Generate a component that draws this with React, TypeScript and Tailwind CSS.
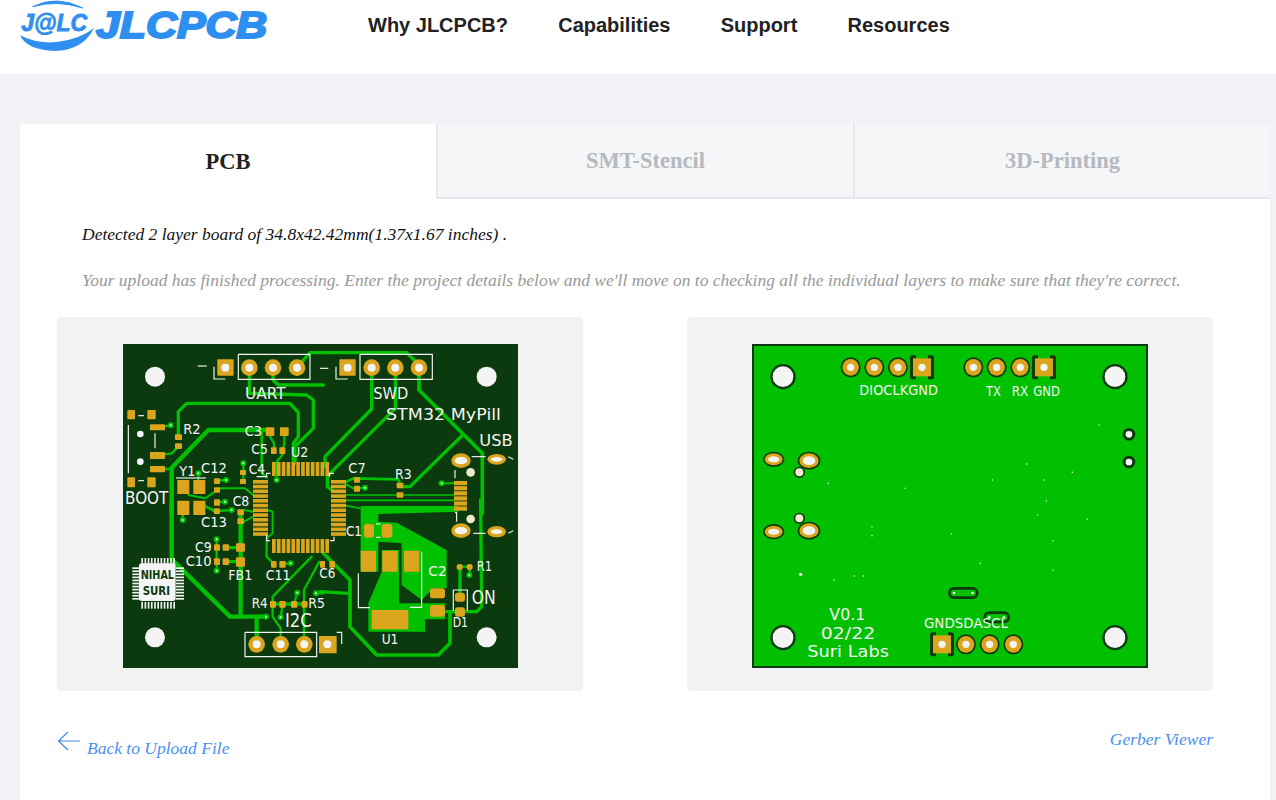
import React from "react";

const G = "#00c000";
const DK = "#0b3a0e";
const AU = "#dba51e";
const W = "#f4f4f4";
const SILK = "DejaVu Sans, sans-serif";

type P = number[];
const Tr = ({ p, w = 10, c = G }: { p: P; w?: number; c?: string }) => (
  <polyline points={p.join(" ")} fill="none" stroke={c} strokeWidth={w} strokeLinejoin="round" strokeLinecap="round" />
);
const Pad = ({ r, c = AU, rx = 2 }: { r: P; c?: string; rx?: number }) => (
  <rect x={r[0]} y={r[1]} width={r[2] - r[0]} height={r[3] - r[1]} rx={rx} fill={c} />
);
const Via = ({ x, y }: { x: number; y: number }) => (
  <g>
    <circle cx={x} cy={y} r={9} fill={G} />
    <circle cx={x} cy={y} r={3} fill={W} />
  </g>
);
const Sk = ({ x, y, s, size = 42, len, fill = W }: { x: number; y: number; s: string; size?: number; len?: number; fill?: string }) => (
  <text x={x} y={y} fontSize={size} fontFamily={SILK} fill={fill} textLength={len} lengthAdjust="spacingAndGlyphs">
    {s}
  </text>
);
const Silk = ({ p }: { p: P }) => <polyline points={p.join(" ")} fill="none" stroke={W} strokeWidth={3.5} />;
const Ring = ({ x, y }: { x: number; y: number }) => (
  <g>
    <circle cx={x} cy={y} r={25} fill={AU} />
    <circle cx={x} cy={y} r={12} fill={W} />
  </g>
);
const Z = ({ x, y, children }: { x: number; y: number; children: React.ReactNode }) => (
  <g transform={`translate(${x} ${y}) scale(0.3333)`}>{children}</g>
);

const range = (n: number) => Array.from({ length: n }, (_, i) => i);

function FrontBoard() {
  return (
    <svg viewBox="123 344 395 324" width={395} height={324} className="block">
      <rect x="123" y="344" width="395" height="324" fill={DK} />
      {/* tracks */}
      <Z x={120} y={340}>
        <Tr p={[388, 83, 388, 160, 560, 165, 580, 180, 580, 265, 525, 320, 525, 370]} />
        <Tr p={[459, 83, 459, 120, 475, 135, 610, 135]} />
        <Tr p={[531, 83, 570, 38, 610, 38]} />
        <Tr p={[175, 290, 175, 215, 200, 190, 510, 190, 535, 218, 535, 290, 520, 310, 520, 370]} />
        <Tr p={[155, 520, 155, 383, 265, 270, 440, 270]} w={13} />
        <Tr p={[120, 345, 155, 340, 175, 320]} w={7} />
        <Tr p={[112, 262, 152, 256]} w={7} />
        <Tr p={[112, 387, 155, 387]} w={7} />
        <Tr p={[425, 275, 425, 400, 440, 412]} w={8} />
        <Tr p={[450, 275, 450, 290, 462, 310, 462, 335]} w={7} />
        <Tr p={[493, 275, 493, 310, 487, 335, 487, 345, 470, 365, 470, 420]} w={7} />
        <Tr p={[370, 370, 370, 420]} w={7} />
        <Tr p={[235, 400, 235, 430]} w={7} />
        <Tr p={[290, 422, 318, 420]} w={7} />
        <Tr p={[205, 465, 255, 475, 300, 445, 375, 445, 400, 465]} w={6} />
        <Tr p={[290, 487, 315, 485]} w={7} />
        <Tr p={[255, 497, 290, 520]} w={6} />
      </Z>
      <Z x={320} y={340}>
        <Tr p={[0, 38, 260, 38, 297, 75]} />
        <Tr p={[297, 83, 297, 150, 487, 340, 487, 520]} w={11} />
        <Tr p={[155, 83, 155, 207, 15, 350, 15, 380]} />
        <Tr p={[226, 83, 226, 205, 30, 400, 22, 412, 22, 440, 35, 450]} />
        <Tr p={[428, 285, 270, 440, 240, 440]} w={10} />
        <Tr p={[80, 425, 100, 415, 235, 418, 240, 430]} w={8} />
        <Tr p={[75, 432, 100, 445, 135, 443]} w={6} />
        <Tr p={[75, 465, 402, 465]} w={5} />
        <Tr p={[75, 481, 402, 481]} w={5} />
        <Tr p={[75, 496, 120, 505]} w={5} />
        <Tr p={[365, 430, 402, 430]} w={6} />
      </Z>
      <Z x={120} y={500}>
        <Tr p={[155, 0, 155, 178, 330, 350, 440, 350]} w={13} />
        <Tr p={[362, 40, 362, 350]} w={13} />
        <Tr p={[410, 350, 410, 430]} w={13} />
        <Tr p={[290, 118, 290, 212]} w={7} />
        <Tr p={[318, 143, 362, 143]} w={10} />
        <Tr p={[318, 185, 362, 185]} w={10} />
        <Tr p={[440, 120, 440, 170, 462, 192]} w={7} />
        <Tr p={[487, 192, 512, 190]} w={7} />
        <Tr p={[443, 30, 458, 35, 458, 100, 440, 115]} w={6} />
        <Tr p={[255, 20, 290, 33, 335, 30]} w={7} />
        <Tr p={[188, 40, 188, 60]} w={7} />
        <Tr p={[400, 35, 372, 30]} w={6} />
        <Tr p={[400, 50, 372, 65]} w={6} />
        <Tr p={[575, 170, 458, 290, 458, 350, 482, 385, 482, 430]} w={7} />
        <Tr p={[598, 185, 552, 270, 552, 430]} w={7} />
        <Tr p={[460, 312, 560, 312]} w={10} />
        <Tr p={[532, 278, 522, 312]} w={7} />
        <Tr p={[482, 352, 487, 320]} w={7} />
        <Tr p={[582, 280, 610, 280]} w={7} />
      </Z>
      <Z x={320} y={500}>
        <polygon fill={G} points="122,18 415,18 415,35 175,42 175,65 230,68 380,150 380,265 340,265 305,300 245,255 245,130 175,125 175,215 122,215" />
        <polygon fill={G} points="185,150 237,150 237,310 375,310 375,358 315,358 315,395 145,395 145,310 185,215" />
        <Tr p={[482, 0, 485, 320, 470, 335, 345, 335]} w={10} />
        <Tr p={[420, 200, 420, 290]} w={10} />
        <Tr p={[420, 200, 450, 200, 448, 225]} w={7} />
        <Tr p={[10, 160, 90, 240, 90, 380, 170, 465, 355, 465, 390, 430, 390, 340]} w={11} />
        <Tr p={[0, 275, 85, 280]} w={10} />
      </Z>
      {/* vias */}
      <Z x={120} y={340}>
        {[[152, 256], [370, 370], [235, 400], [470, 420], [318, 420], [315, 485]].map(([x, y]) => <Via key={`${x}-${y}`} x={x} y={y} />)}
      </Z>
      <Z x={320} y={340}>
        <Via x={135} y={443} />
        <Via x={365} y={430} />
      </Z>
      <Z x={120} y={500}>
        {[[290, 118], [290, 212], [512, 190], [335, 30], [188, 60], [438, 350], [532, 278], [482, 352], [588, 280]].map(([x, y]) => <Via key={`${x}-${y}`} x={x} y={y} />)}
      </Z>
      <Z x={320} y={500}>
        <Via x={448} y={225} />
      </Z>
      {/* U2 fine pins */}
      {range(12).map((i) => (
        <g key={i} fill={AU}>
          <rect x={272 + i * 4.85} y={462} width={3.7} height={14} />
          <rect x={272 + i * 4.85} y={539} width={3.7} height={14} />
          <rect x={253} y={480 + i * 4.75} width={15} height={3.6} />
          <rect x={331} y={480 + i * 4.75} width={15} height={3.6} />
        </g>
      ))}
      {range(6).map((i) => (
        <rect key={i} x={454} y={481 + i * 5.1} width={13} height={4.2} fill={AU} />
      ))}
      {/* pads */}
      <Z x={120} y={340}>
        {[
          [90, 253, 135, 271], [90, 336, 135, 357], [90, 378, 135, 397], [22, 210, 45, 238], [82, 210, 107, 238], [22, 412, 45, 442], [82, 412, 107, 442],
          [165, 283, 186, 300], [165, 310, 186, 327], [437, 262, 463, 288], [480, 262, 506, 288], [453, 322, 470, 342], [478, 322, 496, 342],
          [360, 390, 378, 405], [360, 417, 378, 432], [172, 420, 208, 462], [220, 420, 256, 462], [172, 482, 208, 525], [220, 482, 256, 525],
          [282, 415, 300, 432], [282, 442, 300, 458], [282, 478, 300, 497],
        ].map((r) => <Pad key={r.join()} r={r} />)}
        <Pad r={[292, 58, 341, 107]} />
        <circle cx={316} cy={83} r={12} fill={W} />
        <Ring x={388} y={83} />
        <Ring x={459} y={83} />
        <Ring x={531} y={83} />
        <circle cx={105} cy={110} r={30} fill={W} />
        <circle cx={61} cy={282} r={10} fill={W} />
        <circle cx={61} cy={365} r={10} fill={W} />
      </Z>
      <Z x={320} y={340}>
        <Pad r={[58, 58, 107, 107]} />
        <circle cx={83} cy={83} r={12} fill={W} />
        <Ring x={155} y={83} />
        <Ring x={226} y={83} />
        <Ring x={297} y={83} />
        <circle cx={500} cy={110} r={30} fill={W} />
        {[[102, 412, 120, 428], [102, 437, 120, 455], [230, 428, 250, 445], [230, 457, 250, 473]].map((r) => <Pad key={r.join()} r={r} />)}
        <ellipse cx={423} cy={362} rx={29} ry={22} fill={AU} />
        <ellipse cx={423} cy={362} rx={19} ry={11} fill={W} />
        <ellipse cx={530} cy={358} rx={28} ry={16} fill={AU} />
        <ellipse cx={530} cy={358} rx={17} ry={7} fill={W} />
        <circle cx={452} cy={397} r={13} fill="#eee9c8" />
      </Z>
      <Z x={120} y={500}>
        {[
          [282, 133, 300, 152], [308, 133, 327, 152], [348, 130, 375, 155], [282, 175, 300, 195], [308, 175, 327, 195], [348, 172, 375, 200],
          [453, 183, 470, 203], [478, 183, 497, 203], [352, 28, 372, 46], [352, 55, 372, 72], [282, 25, 300, 42],
          [450, 303, 468, 323], [478, 303, 497, 323], [513, 303, 532, 323], [545, 303, 562, 323],
        ].map((r) => <Pad key={r.join()} r={r} rx={3} />)}
        <Ring x={410} y={433} />
        <Ring x={482} y={433} />
        <Ring x={553} y={433} />
        <circle cx={105} cy={412} r={30} fill={W} />
        {range(11).map((i) => (
          <g key={i} fill={W}>
            <rect x={64 + i * 9.6} y={174} width={5} height={20} />
            <rect x={64 + i * 9.6} y={306} width={5} height={20} />
            <rect x={37} y={202 + i * 9.2} width={24} height={5} />
            <rect x={168} y={202 + i * 9.2} width={24} height={5} />
          </g>
        ))}
        <rect x={57} y={190} width={110} height={113} rx={8} fill={W} />
      </Z>
      <Z x={320} y={500}>
        {[[122, 152, 168, 215], [187, 152, 233, 215], [252, 152, 298, 215], [155, 330, 265, 388], [0, 183, 15, 203], [28, 183, 45, 203]].map((r) => <Pad key={r.join()} r={r} />)}
        {[[132, 72, 162, 113], [185, 72, 217, 113], [330, 265, 375, 295], [330, 315, 375, 350], [405, 278, 435, 305], [405, 322, 435, 350], [410, 192, 428, 210], [440, 192, 458, 210]].map((r) => <Pad key={r.join()} r={r} rx={8} />)}
        <ellipse cx={423} cy={92} rx={29} ry={22} fill={AU} />
        <ellipse cx={423} cy={92} rx={19} ry={11} fill={W} />
        <ellipse cx={530} cy={95} rx={28} ry={17} fill={AU} />
        <ellipse cx={530} cy={95} rx={17} ry={7} fill={W} />
        <circle cx={452} cy={57} r={13} fill="#eee9c8" />
        <circle cx={500} cy={412} r={30} fill={W} />
        <Pad r={[-3, 408, 50, 460]} />
        <circle cx={22} cy={433} r={12} fill={W} />
      </Z>
      {/* silkscreen */}
      <Z x={120} y={340}>
        <Silk p={[355, 43, 570, 43, 570, 118, 355, 118, 355, 43]} />
        <Silk p={[282, 80, 282, 117, 316, 117]} />
        <Silk p={[233, 78, 260, 78]} />
        <Silk p={[55, 227, 72, 227]} />
        <Silk p={[55, 422, 72, 422]} />
        <Silk p={[25, 255, 25, 400]} />
        <Silk p={[105, 280, 105, 325]} />
        <Silk p={[168, 414, 258, 414]} />
        <Silk p={[410, 410, 440, 410, 440, 400, 452, 400]} />
        <Sk x={375} y={176} s="UART" size={46} len={122} />
        <Sk x={190} y={282} s="R2" size={42} len={52} />
        <Sk x={374} y={288} s="C3" size={42} len={52} />
        <Sk x={394} y={342} s="C5" size={42} len={50} />
        <Sk x={513} y={352} s="U2" size={42} len={52} />
        <Sk x={178} y={408} s="Y1" size={42} len={48} />
        <Sk x={243} y={398} s="C12" size={42} len={78} />
        <Sk x={386} y={402} s="C4" size={42} len={50} />
        <Sk x={15} y={492} s="BOOT" size={52} len={130} />
        <Sk x={338} y={498} s="C8" size={40} len={50} />
      </Z>
      <Z x={320} y={340}>
        <Silk p={[120, 43, 337, 43, 337, 118, 120, 118, 120, 43]} />
        <Silk p={[48, 80, 48, 117, 83, 117]} />
        <Silk p={[0, 85, 25, 85]} />
        <Silk p={[455, 350, 497, 350]} />
        <Silk p={[405, 390, 405, 415]} />
        <Silk p={[565, 350, 580, 358]} />
        <Silk p={[28, 410, 28, 400, 42, 400]} />
        <Sk x={160} y={178} s="SWD" size={48} len={105} />
        <Sk x={198} y={240} s="STM32 MyPill" size={48} len={345} />
        <Sk x={478} y={318} s="USB" size={48} len={100} />
        <Sk x={85} y={400} s="C7" size={42} len={52} />
        <Sk x={225} y={418} s="R3" size={40} len={50} />
      </Z>
      <Z x={120} y={500}>
        <Sk x={243} y={82} s="C13" size={42} len={78} />
        <Sk x={225} y={155} s="C9" size={42} len={50} />
        <Sk x={197} y={197} s="C10" size={42} len={78} />
        <Sk x={325} y={240} s="FB1" size={40} len={72} />
        <Sk x={437} y={240} s="C11" size={40} len={75} />
        <Sk x={395} y={323} s="R4" size={40} len={48} />
        <Sk x={565} y={323} s="R5" size={40} len={50} />
        <Sk x={495} y={380} s="I2C" size={56} len={80} />
        <Silk p={[375, 397, 590, 397, 590, 470, 375, 470, 375, 397]} />
        <Silk p={[440, 105, 440, 122, 450, 122]} />
        <text x={62} y={238} fontSize={38} fontWeight={700} fontFamily={SILK} fill={DK} textLength={100} lengthAdjust="spacingAndGlyphs">NIHAL</text>
        <text x={68} y={285} fontSize={38} fontWeight={700} fontFamily={SILK} fill={DK} textLength={82} lengthAdjust="spacingAndGlyphs">SURI</text>
      </Z>
      <Z x={320} y={500}>
        <Silk p={[115, 220, 115, 323, 150, 323]} />
        <Silk p={[270, 322, 305, 322, 305, 155]} />
        <Silk p={[400, 332, 400, 270, 442, 270, 442, 332]} />
        <Silk p={[50, 397, 65, 397, 65, 432]} />
        <Silk p={[460, 100, 497, 100]} />
        <Silk p={[565, 100, 580, 92]} />
        <Silk p={[405, 38, 410, 38, 410, 65]} />
        <Silk p={[30, 122, 42, 122, 42, 110]} />
        <Silk p={[168, 72, 182, 72]} />
        <Silk p={[168, 112, 182, 112]} />
        <Sk x={78} y={107} s="C1" size={42} len={48} />
        <Sk x={-2} y={235} s="C6" size={40} len={48} />
        <Sk x={325} y={228} s="C2" size={44} len={55} />
        <Sk x={470} y={212} s="R1" size={42} len={46} />
        <Sk x={455} y={312} s="ON" size={56} len={72} />
        <Sk x={398} y={380} s="D1" size={40} len={46} />
        <Sk x={185} y={432} s="U1" size={40} len={50} />
      </Z>
    </svg>
  );
}

const BackRound = ({ x, y }: { x: number; y: number }) => (
  <g>
    <circle cx={x} cy={y} r={30} fill={DK} />
    <circle cx={x} cy={y} r={25} fill={AU} />
    <circle cx={x} cy={y} r={11} fill={W} />
  </g>
);
const BackSq = ({ x, y }: { x: number; y: number }) => (
  <g>
    <rect x={x - 36} y={y - 36} width={72} height={72} rx={8} fill={DK} />
    <rect x={x - 18} y={y - 42} width={36} height={84} fill={G} />
    <rect x={x - 27} y={y - 27} width={54} height={54} fill={AU} />
    <circle cx={x} cy={y} r={11} fill={W} />
  </g>
);
const Hole = ({ x, y }: { x: number; y: number }) => (
  <g>
    <circle cx={x} cy={y} r={38} fill={DK} />
    <circle cx={x} cy={y} r={31} fill={W} />
  </g>
);
const Oval = ({ x, y, rx, ry }: { x: number; y: number; rx: number; ry: number }) => (
  <g>
    <ellipse cx={x} cy={y} rx={rx} ry={ry} fill={DK} />
    <ellipse cx={x} cy={y} rx={rx - 5} ry={ry - 5} fill={AU} />
    <ellipse cx={x} cy={y} rx={rx - 15} ry={ry - 14} fill={W} />
  </g>
);
const Slot = ({ x, y, rx }: { x: number; y: number; rx: number }) => (
  <g>
    <rect x={x - rx} y={y - 18} width={rx * 2} height={36} rx={18} fill={DK} />
    <rect x={x - rx + 8} y={y - 10} width={rx * 2 - 16} height={20} rx={10} fill={G} />
    <circle cx={x - rx + 18} cy={y} r={4} fill={W} />
    <circle cx={x + rx - 18} cy={y} r={4} fill={W} />
  </g>
);

function BackBoard() {
  const d1 = [[1047, 255], [830, 372], [967, 397], [727, 420], [883, 420], [889, 483], [235, 430], [466, 445]];
  const d2 = [[863, 45], [1012, 58], [366, 80], [366, 107], [604, 101], [909, 122], [691, 190], [909, 210], [252, 240], [313, 228], [340, 228]];
  return (
    <svg viewBox="752 344 396 324" width={396} height={324} className="block">
      <rect x="752" y="344" width="396" height="324" fill="#f4f4f4" />
      <rect x="753" y="345" width="394" height="322" fill={G} stroke={DK} strokeWidth={2} />
      <Z x={750} y={340}>
        <Hole x={99} y={110} />
        <Hole x={1095} y={110} />
        <BackRound x={302} y={82} />
        <BackRound x={373} y={82} />
        <BackRound x={444} y={82} />
        <BackSq x={516} y={82} />
        <BackRound x={670} y={82} />
        <BackRound x={740} y={82} />
        <BackRound x={811} y={82} />
        <BackSq x={882} y={82} />
        <Sk x={328} y={164} s="DIOCLKGND" size={40} len={236} />
        <Sk x={708} y={167} s="TX" size={40} len={45} />
        <Sk x={785} y={167} s="RX" size={40} len={50} />
        <Sk x={850} y={167} s="GND" size={40} len={80} />
        <Oval x={71} y={358} rx={32} ry={23} />
        <Oval x={177} y={362} rx={34} ry={27} />
        <circle cx={148} cy={397} r={17} fill={DK} />
        <circle cx={148} cy={397} r={12} fill="#f3efcf" />
        <circle cx={1137} cy={283} r={19} fill={DK} />
        <circle cx={1137} cy={283} r={10} fill={W} />
        <circle cx={1137} cy={366} r={19} fill={DK} />
        <circle cx={1137} cy={366} r={10} fill={W} />
        {d1.map(([x, y]) => <circle key={`${x}-${y}`} cx={x} cy={y} r={2.2} fill={W} />)}
      </Z>
      <Z x={750} y={500}>
        <Hole x={99} y={413} />
        <Hole x={1095} y={413} />
        <Oval x={71} y={95} rx={32} ry={23} />
        <Oval x={177} y={92} rx={34} ry={27} />
        <circle cx={148} cy={55} r={17} fill={DK} />
        <circle cx={148} cy={55} r={12} fill="#f3efcf" />
        {d2.map(([x, y]) => <circle key={`${x}-${y}`} cx={x} cy={y} r={2.2} fill={W} />)}
        <circle cx={152} cy={223} r={5} fill={W} />
        <Slot x={640} y={279} rx={46} />
        <Slot x={740} y={352} rx={40} />
        <BackSq x={576} y={433} />
        <BackRound x={648} y={433} />
        <BackRound x={719} y={433} />
        <BackRound x={790} y={433} />
        <Sk x={238} y={360} s="V0.1" size={50} len={108} />
        <Sk x={212} y={416} s="02/22" size={50} len={164} />
        <Sk x={172} y={472} s="Suri Labs" size={50} len={245} />
        <Sk x={522} y={385} s="GNDSDASCL" size={40} len={252} />
      </Z>
    </svg>
  );
}

function Logo() {
  return (
    <svg viewBox="0 0 900 180" width={300} height={60} className="block shrink-0">
      <path d="M98 20 Q170 -16 248 24 Q170 -1 98 20Z" fill="#2f8ff0" stroke="#2f8ff0" strokeWidth={3} />
      <path d="M60 106 Q110 132 170 126 Q240 118 282 84 Q250 150 165 153 Q80 150 60 106Z" fill="#2f8ff0" />
      <text x={64} y={92} fontSize={69} fontWeight={700} fontStyle="italic" fontFamily="Liberation Sans, sans-serif" fill="#2f8ff0" stroke="#2f8ff0" strokeWidth={2.5}>J@LC</text>
      <g transform="translate(288 115) scale(1.19 1)">
        <text x={0} y={0} fontSize={108} fontWeight={700} fontStyle="italic" fontFamily="Liberation Sans, sans-serif" fill="#2f8ff0" stroke="#2f8ff0" strokeWidth={6}>JLCPCB</text>
      </g>
    </svg>
  );
}

export default function App() {
  return (
    <div className="h-[800px] overflow-hidden bg-[#f0f2f5]">
      <header className="flex h-[74px] items-start bg-white">
        <Logo />
        <nav className="ml-[68px] flex h-[50px] items-center gap-[50.2px] font-['Liberation_Sans',sans-serif] text-[20px] font-bold text-[#222]">
          <span>Why JLCPCB?</span>
          <span>Capabilities</span>
          <span>Support</span>
          <span>Resources</span>
        </nav>
      </header>
      <main className="ml-5 mr-[6px] mt-[50px] h-[700px] bg-white font-['Liberation_Serif',serif]">
        <div className="flex h-[75px] text-[22.5px] font-bold">
          <div className="flex w-[416px] items-center justify-center bg-white text-[#222]">PCB</div>
          <div className="flex w-[417px] items-center justify-center border-b-2 border-l-2 border-[#e6e8ee] bg-[#f5f6f8] text-[#b6b9bf]">SMT-Stencil</div>
          <div className="flex flex-1 items-center justify-center border-b-2 border-l-2 border-[#e6e8ee] bg-[#f5f6f8] text-[#b6b9bf]">3D-Printing</div>
        </div>
        <p className="ml-[62px] mt-[25px] text-[17.5px] leading-[20px] text-[#111] italic">Detected 2 layer board of 34.8x42.42mm(1.37x1.67 inches) .</p>
        <p className="ml-[62px] mt-[26px] text-[17.5px] leading-[20px] text-[#999] italic">Your upload has finished processing. Enter the project details below and we'll move on to checking all the individual layers to make sure that they're correct.</p>
        <div className="ml-[37px] mr-[57px] mt-[27px] flex justify-between">
          <div className="flex h-[374px] w-[526px] items-start justify-center rounded bg-[#f2f2f2] pt-[27px]">
            <FrontBoard />
          </div>
          <div className="flex h-[374px] w-[526px] items-start justify-center rounded bg-[#f2f2f2] pt-[27px]">
            <BackBoard />
          </div>
        </div>
        <div className="ml-[37px] mr-[57px] mt-[38px] flex items-start justify-between text-[17.5px] italic text-[#4a90f0]">
          <div className="flex items-start">
            <svg width={24} height={20} viewBox="0 0 24 20" className="mt-[2px] shrink-0" fill="none" stroke="#3d8ee8" strokeWidth={1.2}>
              <path d="M23 10H2M11 1L1.5 10L11 19" />
            </svg>
            <span className="ml-[6px] mt-[9px] leading-[20px]">Back to Upload File</span>
          </div>
          <span className="leading-[20px]">Gerber Viewer</span>
        </div>
      </main>
    </div>
  );
}
